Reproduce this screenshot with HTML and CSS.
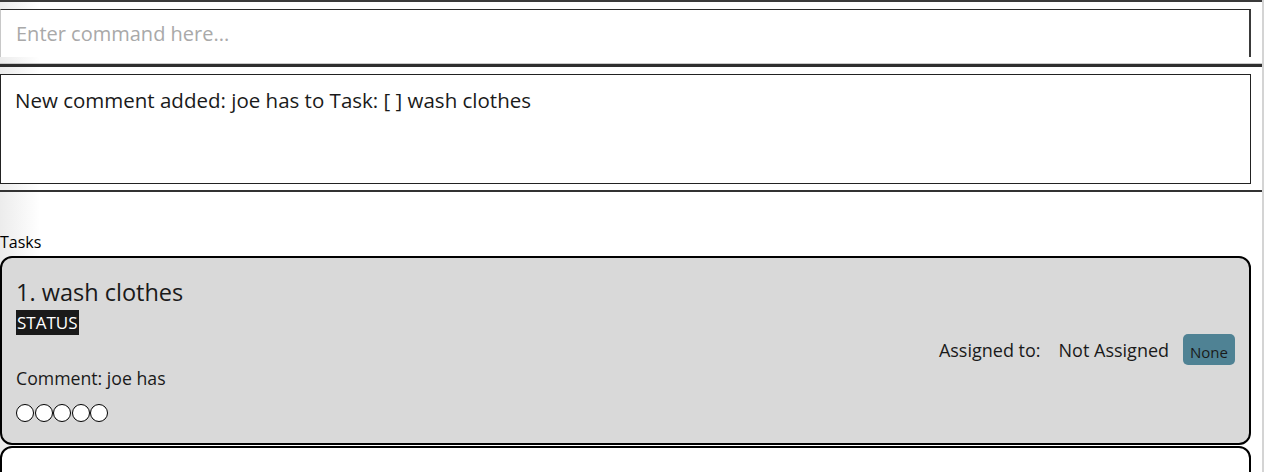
FILE: index.html
```html
<!DOCTYPE html>
<html>
<head>
<meta charset="utf-8">
<link rel="stylesheet" href="styles.css">
</head>
<body>
<div class="window">
  <div class="command-pane">
    <div class="command-box">
      <input class="command-input" type="text" placeholder="Enter command here...">
    </div>
  </div>
  <div class="result-pane">
    <div class="result-box">New comment added: joe has to Task: [ ] wash clothes</div>
  </div>
  <div class="list-pane">
    <div class="list-title">Tasks</div>
    <div class="card">
      <div class="card-left">
        <div class="task-name">1. wash clothes</div>
        <div class="status">STATUS</div>
        <div class="comment">Comment: joe has</div>
        <div class="rating">
          <span class="dot"></span><span class="dot"></span><span class="dot"></span><span class="dot"></span><span class="dot"></span>
        </div>
      </div>
      <div class="card-right">
        <span class="assign-label">Assigned to:</span>
        <span class="assign-value">Not Assigned</span>
        <span class="tag">None</span>
      </div>
    </div>
    <div class="card card-next"></div>
  </div>
</div>
</body>
</html>
```

FILE: styles.css
```css
html, body {
  margin: 0;
  padding: 0;
  background: #ffffff;
  overflow: hidden;
}
body {
  font-family: "Open Sans", "Noto Sans", "Liberation Sans", sans-serif;
  color: #1a1a1a;
  height: 472px;
}
.window {
  width: 1262px;
  height: 472px;
  overflow: hidden;
  border-right: 2px solid #d4d4d4;
  background: linear-gradient(to right, #ececec 0px, #ffffff 40px);
}
.command-pane {
  height: 67px;
  box-sizing: border-box;
  border-top: 2px solid #3a3a3a;
  box-shadow: inset 0 -1px 0 #c9c9c9;
  border-bottom: 3px solid #2e2e2e;
  padding-top: 7px;
  background: linear-gradient(to right, #ececec 0px, #ffffff 40px);
}
.command-box {
  width: 1251px;
  height: 48px;
  box-sizing: border-box;
  border-top: 1px solid #2a2a2a;
  border-left: 1px solid #c8c8c8;
  border-right: 2px solid #3a3a3a;
  border-bottom: none;
  background: #fff;
}
.command-input {
  border: none;
  outline: none;
  width: 100%;
  height: 46px;
  box-sizing: border-box;
  padding: 0 0 0 15px;
  font-family: inherit;
  font-size: 20px;
  color: #1a1a1a;
  background: transparent;
}
.command-input::placeholder {
  color: #a9a9a9;
}
.result-pane {
  height: 125px;
  box-sizing: border-box;
  padding-top: 7px;
  border-bottom: 2px solid #333;
}
.result-box {
  width: 1251px;
  height: 110px;
  box-sizing: border-box;
  border: 1px solid #222;
  background: #fff;
  padding: 11px 14px;
  font-size: 20.5px;
  line-height: 28px;
}
.list-pane {
  padding-top: 40px;
}
.list-title {
  font-size: 16px;
  line-height: 20px;
  color: #000;
  margin-bottom: 4px;
}
.card {
  width: 1251px;
  height: 189px;
  box-sizing: border-box;
  border: 2px solid #000;
  border-radius: 12px;
  background: #d9d9d9;
  display: flex;
  justify-content: space-between;
  padding: 18px 14px 0 14px;
}
.card-next {
  margin-top: 1px;
  background: #fff;
}
.card-left {
  display: flex;
  flex-direction: column;
  align-items: flex-start;
}
.task-name {
  font-size: 23.5px;
  line-height: 32px;
}
.status {
  background: #1a1a1a;
  color: #fff;
  font-size: 17px;
  line-height: 25px;
  padding: 0 1px;
  margin-top: 2px;
}
.comment {
  font-size: 17.7px;
  line-height: 22px;
  margin-top: 32px;
}
.rating {
  display: flex;
  margin-top: 15px;
}
.dot {
  box-sizing: border-box;
  width: 18px;
  height: 18px;
  border: 1.5px solid #000;
  border-radius: 50%;
  background: #fff;
  margin-right: 0.5px;
}
.card-right {
  display: flex;
  align-items: center;
  align-self: flex-start;
  margin-top: 58px;
  font-size: 18px;
}
.assign-label {
  margin-right: 18px;
}
.assign-value {
  margin-right: 14px;
}
.tag {
  background: #4f8294;
  color: #1a1a1a;
  font-size: 15px;
  border-radius: 5px;
  padding: 8px 7px 2px 7px;
  line-height: 21px;
}
```
